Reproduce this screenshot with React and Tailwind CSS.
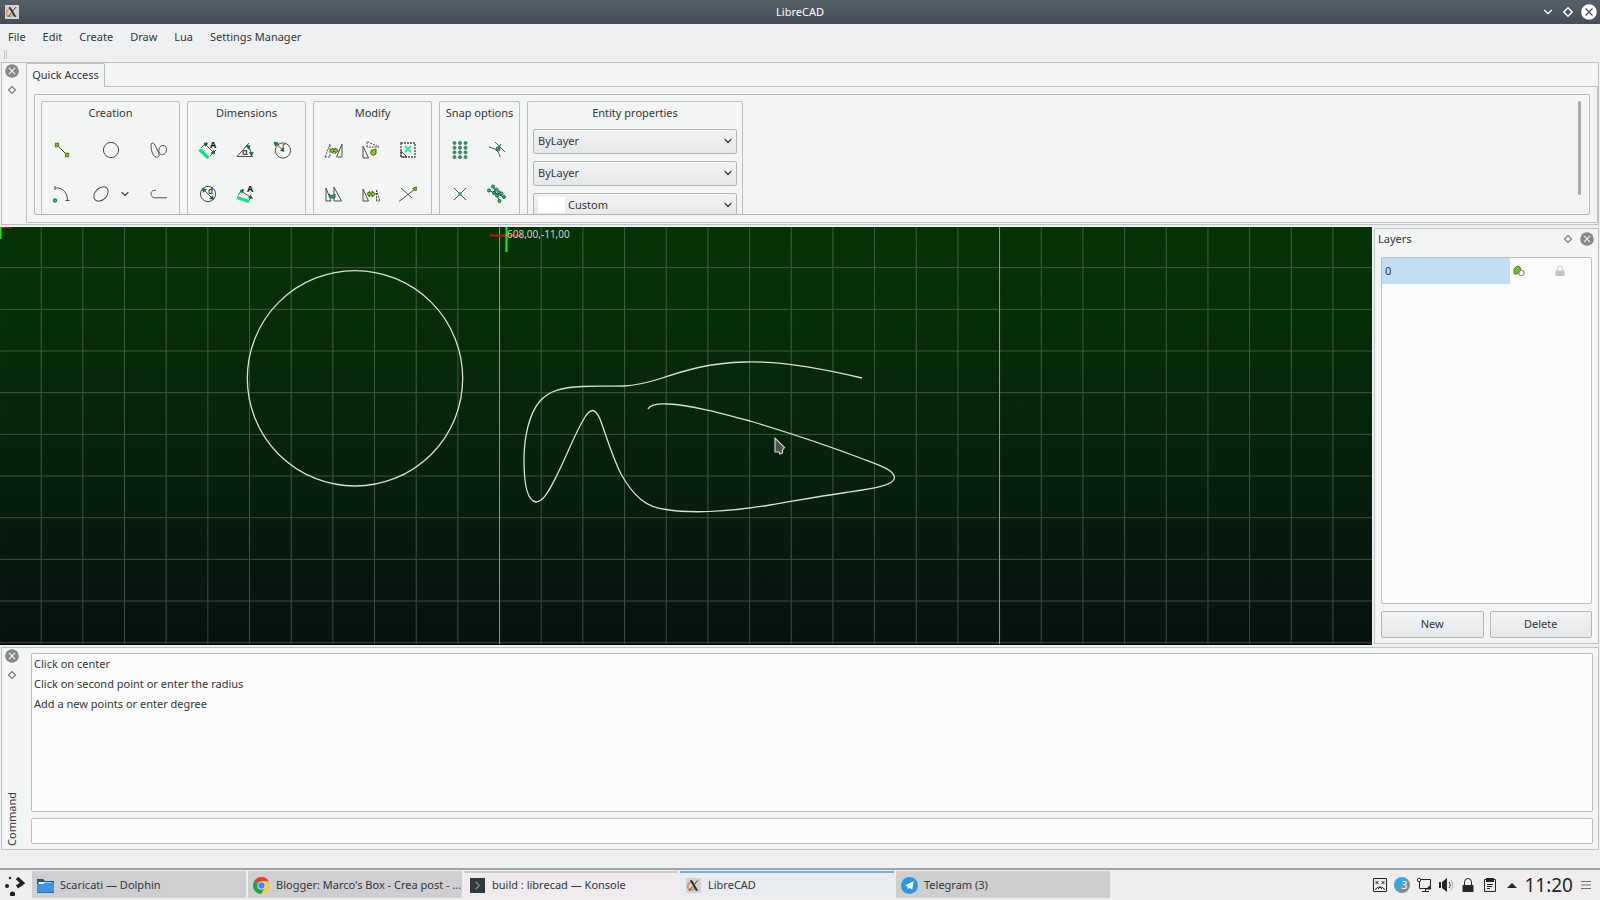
import { ChevronDown } from 'lucide-react'

const menus = ['File', 'Edit', 'Create', 'Draw', 'Lua', 'Settings Manager']

const messages = [
  'Click on center',
  'Click on second point or enter the radius',
  'Add a new points or enter degree',
]

function XLogo({ className }) {
  return (
    <svg viewBox="0 0 16 16" className={className} aria-hidden="true">
      <rect width="16" height="16" fill="#d3d3d1" />
      <path d="M6.5 3.5C2 5 .8 9 2.500 11.500s4.500 2 6.500-.5" fill="none" stroke="#e08a63" strokeWidth="1.6" />
      <path d="M4 2.500h2.500l6.500 11h-2.500z" fill="#2b2b2b" />
      <path d="M12.500 2.500L8.800 7M7 9.200l-3.600 4.300" stroke="#2b2b2b" strokeWidth="1" />
    </svg>
  )
}

function CloseIcon({ className, bg, fg }) {
  return (
    <svg viewBox="0 0 16 16" className={className} aria-hidden="true">
      <circle cx="8" cy="8" r="7.8" fill={bg} />
      <path d="M4.500 4.500l7 7M11.500 4.500l-7 7" stroke={fg} strokeWidth="1.3" />
    </svg>
  )
}

function Diamond({ className }) {
  return (
    <svg viewBox="0 0 10 10" className={className} aria-hidden="true">
      <path d="M5 1.500L8.500 5 5 8.500 1.500 5z" fill="none" stroke="currentColor" strokeWidth="1.2" />
    </svg>
  )
}

// All tool icons share an 18x18 box
function Tool({ label, children }) {
  return (
    <button type="button" aria-label={label} className="flex h-5 w-5 items-center justify-center">
      <svg viewBox="0 0 18 18" className="h-[18px] w-[18px] overflow-visible" fill="none" stroke="#4a4d4f" strokeWidth="1">
        {children}
      </svg>
    </button>
  )
}

const Arrow = ({ d }) => <path d={d} fill="#12693c" stroke="#12693c" strokeWidth="0.6" />

function AlignedIcon({ label, low }) {
  return (
    <Tool label={label}>
      <path d={low ? 'M1 12.500L13 16.500' : 'M.5 8.500L9.500 17'} stroke="#13e08a" strokeWidth="3.2" />
      <path d={low ? 'M2 10l5-6M13 15l3-3M5 6l11 7' : 'M2 7l6-6M11 15l6-6M6 3l9 9'} />
      <Arrow d={low ? 'M4 5.500l4-.8-1.600 3.400zM16.500 13.500l-4-.6 2-2.800z' : 'M5 2l4 .6-2.800 2.800zM16 13l-4-.8 2.800-3z'} />
      <text x="11" y="7" fontSize="9" fontWeight="700" fill="#111" stroke="none">A</text>
    </Tool>
  )
}

function Creation() {
  return (
    <>
      <Tool label="Line">
        <path d="M4 4l10 10" stroke="#333" />
        <path d="M2.500 2.500h3v3h-3zM12.500 12.500h3v3h-3z" fill="#a4d63a" stroke="#5a8c12" strokeWidth="1.3" />
      </Tool>
      <Tool label="Circle">
        <circle cx="9" cy="9" r="7.6" />
      </Tool>
      <Tool label="Spline">
        <path d="M2 2C-.5 4 2 16 6.500 16.300c4 .2 2.500-4 1-7C6 6 4 1 2 2z" />
        <path d="M13 4.500c-3.500 0-4.500 4-4 6.500.6 3 4 3.500 6 1.500s2.500-8-2-8z" />
      </Tool>
      <Tool label="Arc">
        <path d="M2 3c8-1 12.500 5 12.500 12.500M2 1v4M12.500 15.500h4" />
        <circle cx="2" cy="15.500" r="1.500" fill="#7bbf9c" stroke="#12805a" strokeWidth="1.3" />
      </Tool>
      <div className="flex items-center gap-2">
        <Tool label="Ellipse">
          <ellipse cx="9" cy="9" rx="8.300" ry="5.800" transform="rotate(-45 9 9)" />
        </Tool>
        <button type="button" aria-label="More ellipses" className="text-[#4a4d4f]">
          <ChevronDown className="h-3 w-3" strokeWidth={2.5} />
        </button>
      </div>
      <Tool label="Polyline">
        <path d="M6 5.500C2 4.500 0 8 1.500 10.500c1 2 2 2.300 4 2.300H17" />
      </Tool>
    </>
  )
}

function Dimensions() {
  return (
    <>
      <AlignedIcon label="Aligned dimension" />
      <Tool label="Angular dimension">
        <path d="M1 15.500h16M1 15.500L13 2M11 4c3 3 4.500 7 4.500 11" />
        <Arrow d="M10 5l4-.6-1 4zM15.500 15l-2.200-3.500h4z" />
        <text x="6" y="14" fontSize="9" fontWeight="600" fill="#333" stroke="none">α</text>
      </Tool>
      <Tool label="Radius dimension">
        <circle cx="10" cy="9.500" r="7.600" />
        <path d="M2 1.500l8 8" />
        <Arrow d="M1 1l4.500 1-3.200 3.200zM11 10.500L7.500 9.500l3-3z" />
        <text x="9" y="8" fontSize="8" fill="#333" stroke="none">r</text>
      </Tool>
      <Tool label="Diameter dimension">
        <circle cx="9" cy="9" r="7.600" />
        <path d="M4 4l10 10" />
        <Arrow d="M3 3.500l4.500.8-3 3zM15 14.500l-4.500-.8 3-3z" />
        <text x="9" y="9" fontSize="8" fontWeight="600" fill="#333" stroke="none">d</text>
      </Tool>
      <AlignedIcon label="Linear dimension" low />
    </>
  )
}

function Modify() {
  return (
    <>
      <Tool label="Move">
        <path d="M0 16L5 3v13z" strokeDasharray="2 1" />
        <path d="M17 3v13h-5.500z" />
        <path d="M5 9.500l3-2.500v1.500h2V7l3.500 2.500-3.500 3v-2H8v2z" fill="#8cc81e" stroke="#3e6b0a" />
      </Tool>
      <Tool label="Rotate">
        <path d="M1 5v12h5.500z" />
        <path d="M5 6V.5L17 6z" strokeDasharray="2 1" />
        <path d="M9 9.500l5-1.500v5l-2 1c-2 1-4-1-3-4z" fill="#8cc81e" stroke="#3e6b0a" />
      </Tool>
      <Tool label="Scale">
        <path d="M2 2h14v14H2z" strokeDasharray="2 1" strokeWidth="1.4" />
        <path d="M2 10l6 6H2z" />
        <path d="M6 5l6 6M12 5l-6 6" stroke="#2ee6a0" strokeWidth="1.8" />
      </Tool>
      <Tool label="Mirror">
        <path d="M1 3v13h5zM9 2l7.500 14H9z" />
        <path d="M4 9c2 2 4 2 6 0v4H6z" fill="#2f9e7a" stroke="#176b50" />
      </Tool>
      <Tool label="Copy">
        <path d="M1 4v12h5.500z" />
        <path d="M14.500 5l3.500 11h-3.500z" strokeDasharray="2 1" />
        <path d="M5 8.500l2.500-2V8H10V6l3.500 3-3.500 3v-2H7.500v2z" fill="#8cc81e" stroke="#3e6b0a" />
      </Tool>
      <Tool label="Trim">
        <path d="M0 16.500L16 4M2 3l11 10" />
        <path d="M13.500 3.500L17.500 2l-.5 4z" fill="#8cc81e" stroke="#4a6b1a" />
      </Tool>
    </>
  )
}

const gridDots = [2, 6.7, 11.3, 16]
const entityDots = [[5, 1.5], [1, 5.5], [8.5, 4.5], [6, 8], [11, 7.5], [9, 10.5], [13.5, 8.5], [16, 12], [11.5, 16]]

function SnapOptions() {
  return (
    <>
      <Tool label="Snap to grid">
        {gridDots.map((y) =>
          [3.5, 9, 14.5].map((x) => (
            <circle key={`${x}-${y}`} cx={x} cy={y} r="1.500" fill="#3a9e6c" stroke="#12693c" strokeWidth="0.7" />
          ))
        )}
      </Tool>
      <Tool label="Snap to intersection">
        <path d="M1 6c8 2 10 5 11 10M7 1l10 10M13 3L9 8" />
        <circle cx="10" cy="8" r="2" fill="#3a9e6c" stroke="#12693c" />
      </Tool>
      <Tool label="Snap to middle">
        <path d="M3 3l12 12M15 3L3 15" />
        <circle cx="9" cy="9" r="1.800" fill="#3a9e6c" stroke="none" />
      </Tool>
      <Tool label="Snap to entity">
        <path d="M1 5.500l15 6.500M5 1.500L11.500 16" stroke="#12693c" />
        {entityDots.map(([x, y]) => (
          <circle key={`${x}-${y}`} cx={x} cy={y} r="1.500" fill="#4fb084" stroke="#12693c" />
        ))}
      </Tool>
    </>
  )
}

function Group({ title, className, grid, children }) {
  return (
    <section className={`h-36 shrink-0 rounded-xs border border-[#bdbfc0] ${className}`}>
      <h2 className="pt-[3px] text-center leading-4">{title}</h2>
      <div className={`mt-[7px] grid auto-rows-[44px] place-items-center ${grid}`}>{children}</div>
    </section>
  )
}

function Combo({ label, options, swatch }) {
  return (
    <div className="relative">
      <select
        aria-label={label}
        className={`block h-[25px] w-full appearance-none rounded-xs border border-[#b4b6b8] bg-linear-to-b from-[#f1f2f3] to-[#e7e8ea] pr-6 ${swatch ? 'pl-[34px]' : 'pl-1'}`}
      >
        {options.map((o) => (
          <option key={o}>{o}</option>
        ))}
      </select>
      {swatch && <span className="absolute top-1 left-[5px] h-4 w-[27px] bg-white" />}
      <ChevronDown className="pointer-events-none absolute top-1.5 right-[3px] h-3 w-3 text-[#3a3d40]" strokeWidth={2.5} />
    </div>
  )
}

function DockControls() {
  return (
    <>
      <button type="button" aria-label="Close dock">
        <CloseIcon className="h-3.5 w-3.5" bg="#868889" fg="#f5f6f6" />
      </button>
      <button type="button" aria-label="Float dock" className="text-[#7b7d7f]">
        <Diamond className="h-2.5 w-2.5" />
      </button>
    </>
  )
}

function Drawing() {
  return (
    <svg className="block h-full w-full" role="img" aria-label="Drawing area">
      <defs>
        <linearGradient id="backdrop" x1="0" y1="0" x2="0" y2="1">
          <stop offset="0" stopColor="#063406" />
          <stop offset="1" stopColor="#071210" />
        </linearGradient>
        <pattern id="grid" x="-1" y="-1.500" width="41.670" height="41.670" patternUnits="userSpaceOnUse">
          <path d="M0 .5h41.670M.5 0v41.670" stroke="#fff" strokeOpacity="0.22" />
        </pattern>
      </defs>
      <rect width="100%" height="100%" fill="url(#backdrop)" />
      <rect width="100%" height="100%" fill="url(#grid)" />
      <path d="M499.500 0v2000M999.500 0v2000" stroke="#a9b3a9" strokeOpacity="0.7" />
      <path d="M0 .5h12" stroke="#b31212" strokeWidth="2" />
      <path d="M.5 0v12" stroke="#1fe01f" strokeWidth="2" />
      <path d="M490 8.500h32" stroke="#c81414" strokeWidth="2" />
      <path d="M506.500 0v25" stroke="#28e628" strokeWidth="2" />
      <text x="507" y="11" fontSize="10" fill="#c9d2c9">608,00,-11,00</text>
      <g fill="none" stroke="#d6e0d2" strokeWidth="1.3">
        <circle cx="355" cy="151.300" r="107.700" />
        <path d="M862 151C816 140 777 134 745 135C709 136 686 143 659 152C643 157 636 158.500 624 159C606 159.500 597 158.500 582 159.500C561 160.500 549 164 540 174C529 187 524 210 524 233C524 258 528 274 536 275C544 275 551 260 558 246C568 226 575 206 585 190C591 181 595 181 600 192C606 208 612 229 621 247C634 270 646 280 666 282.500C700 288 745 282 770 278C800 273 815 270 846 265.500C870 262 894.500 259 894.500 250.500C894.500 243 878 237.500 863 232C830 219.500 790 206 750 194C720 186 690 178 668 177C658 176.500 650 178 648 182" />
      </g>
      <path d="M775 211v14h4l1 2 2.500-1v-3l2-2.500z" fill="#4d544f" stroke="#d5d9d5" strokeWidth="1.1" />
    </svg>
  )
}

function FolderIcon() {
  return (
    <svg viewBox="0 0 17 17" className="h-[17px] w-[17px] shrink-0" aria-hidden="true">
      <path d="M0 2h6l2 2h9v6H0z" fill="#20557e" />
      <path d="M1.500 5H15v5H1.500z" fill="#f4f8fb" />
      <path d="M0 7h6l2-1.500h9V16H0z" fill="#3d93e8" />
      <path d="M0 15h17v1H0z" fill="#2a6db5" />
    </svg>
  )
}

function ChromeIcon() {
  return (
    <svg viewBox="0 0 18 18" className="h-[17px] w-[17px] shrink-0" aria-hidden="true">
      <circle cx="9" cy="9" r="9" fill="#f6cb3c" />
      <path d="M9 9L1.200 4.500A9 9 0 0 1 16.800 4.500H9z" fill="#dc4437" />
      <path d="M9 9L1.200 4.500A9 9 0 0 0 8.500 18L12.500 11z" fill="#1ea05c" />
      <circle cx="9" cy="9" r="4.300" fill="#f3f3f3" />
      <circle cx="9" cy="9" r="3.400" fill="#4a88ee" />
    </svg>
  )
}

function KonsoleIcon() {
  return (
    <svg viewBox="0 0 16 16" className="h-[17px] w-[17px] shrink-0 px-px" aria-hidden="true">
      <rect width="16" height="16" fill="#33383b" />
      <path d="M6 4l4 4-4 4" fill="none" stroke="#8a9094" strokeWidth="1.2" />
    </svg>
  )
}

function TelegramIcon() {
  return (
    <svg viewBox="0 0 16 16" className="h-[17px] w-[17px] shrink-0" aria-hidden="true">
      <circle cx="8" cy="8" r="8" fill="#2a96e6" />
      <path d="M3.500 8l8.500-4-1.500 8-2.500-2-1.500 1.500L6 9z" fill="#fff" />
    </svg>
  )
}

const tasks = [
  { title: 'Scaricati — Dolphin', icon: <FolderIcon />, look: 'border-t-[#d0d0d2] bg-[#cfcfd1]' },
  { title: "Blogger: Marco's Box - Crea post - ...", icon: <ChromeIcon />, look: 'border-t-[#d0cfd1] bg-[#cfced0]' },
  { title: 'build : librecad — Konsole', icon: <KonsoleIcon />, look: 'border-t-[#cdcbce] bg-[#efebee]' },
  { title: 'LibreCAD', icon: <XLogo className="h-[17px] w-[17px] shrink-0 px-px" />, look: 'border-t-[#6fb4dc] bg-[#e9ecf0]' },
  { title: 'Telegram (3)', icon: <TelegramIcon />, look: 'border-t-[#cfcfd0] bg-[#cececf]' },
]

function Tray() {
  return (
    <div className="flex items-center gap-[2px] pr-[9px] text-[#232629]">
      <div className="flex items-center gap-[6px]">
        <svg viewBox="0 0 16 16" className="h-4 w-4" fill="none" stroke="currentColor" aria-hidden="true">
          <path d="M1.500 1.500h13v13h-13z" />
          <path d="M3.500 4l3 3M6.500 4l-3 3M9.500 4l3 3M12.500 4l-3 3M3.500 13c1-4 8-4 9 0M6 12l2-2 2 2" />
        </svg>
        <span className="flex h-4 w-4 items-center justify-center rounded-full bg-linear-to-br from-[#35a8dc] from-50% to-[#8b8b8b] to-60% pl-1 text-[10px] leading-4 text-white">3</span>
        <svg viewBox="0 0 16 16" className="h-4 w-4" fill="none" stroke="currentColor" aria-hidden="true">
          <path d="M5 2.500h9.500v9H3.500V5M6 14.500h7M9.500 12v2" />
          <circle cx="3" cy="3" r="1.700" />
          <path d="M10.500 12l4-3.500V12z" fill="currentColor" />
        </svg>
        <svg viewBox="0 0 16 16" className="h-4 w-4" fill="currentColor" aria-hidden="true">
          <path d="M1 5h2v6H1zM4 5l5-4v14l-5-4z" />
          <path d="M11 5c1.500 2 1.500 4 0 6" fill="none" stroke="currentColor" />
          <path d="M12.500 2.500c3 3 3 8 0 11" fill="none" stroke="#aaa" />
        </svg>
        <svg viewBox="0 0 16 16" className="h-4 w-4" fill="currentColor" aria-hidden="true">
          <path d="M2.500 8h11v7h-11z" />
          <path d="M4.500 8V5a3.500 3.500 0 0 1 7 0v3" fill="none" stroke="currentColor" />
        </svg>
        <svg viewBox="0 0 16 16" className="h-4 w-4" fill="none" stroke="currentColor" aria-hidden="true">
          <path d="M2.500 2.500h11v12h-11zM5 7.500h6M5 9.500h5M5 11.500h3" />
          <path d="M4 1h8v4H4z" fill="currentColor" stroke="none" />
        </svg>
        <svg viewBox="0 0 16 16" className="h-4 w-4" fill="currentColor" aria-hidden="true">
          <path d="M3 11l5-5 5 5z" />
        </svg>
      </div>
      <time className="pl-[2px] text-[19px] leading-6">11:20</time>
      <button type="button" aria-label="Panel menu" className="pl-[6px]">
        <svg viewBox="0 0 10 10" className="h-2.5 w-2.5" stroke="#6d6f71" strokeWidth="1.2" aria-hidden="true">
          <path d="M0 1.500h10M0 5h10M0 8.500h10" />
        </svg>
      </button>
    </div>
  )
}

export default function App() {
  return (
    <div className="flex h-screen flex-col overflow-hidden bg-[#eff0f1] font-['Noto_Sans',sans-serif] text-[11px] text-[#31363b]">
      <header className="flex h-6 shrink-0 items-center bg-linear-to-b from-[#566069] to-[#454e56] pr-[3px] pl-[5px] text-white">
        <XLogo className="h-3.5 w-3.5" />
        <h1 className="flex-1 pl-10 text-center">LibreCAD</h1>
        <div className="flex items-center gap-[7px]">
          <button type="button" aria-label="Minimize"><ChevronDown className="h-3.5 w-3.5" strokeWidth={2} /></button>
          <button type="button" aria-label="Maximize"><Diamond className="h-3 w-3" /></button>
          <button type="button" aria-label="Close"><CloseIcon className="h-4 w-4" bg="#fcfcfc" fg="#4a535b" /></button>
        </div>
      </header>

      <nav className="flex h-[26px] shrink-0 items-center gap-[17px] px-2">
        {menus.map((m) => (
          <button key={m} type="button">{m}</button>
        ))}
      </nav>
      <div className="flex h-3 shrink-0 gap-px pl-1">
        <span className="h-[9px] w-px bg-[#c3c5c6]" />
        <span className="h-[9px] w-px bg-[#c3c5c6]" />
      </div>

      <section className="mx-px flex h-[163px] shrink-0 border border-[#c0c2c3] bg-[#f3f5f4]">
        <div className="flex w-6 shrink-0 flex-col items-center gap-[7px] pt-px pr-1">
          <DockControls />
        </div>
        <div className="flex min-w-0 flex-1 flex-col pb-px">
          <div className="flex h-6 shrink-0" role="tablist">
            <button type="button" role="tab" aria-selected="true" className="w-[79px] rounded-t-xs border border-b-0 border-[#bdbfc0]">
              Quick Access
            </button>
            <div className="flex-1 border-b border-[#bdbfc0]" />
          </div>
          <div className="flex min-h-0 flex-1 border border-t-0 border-[#bdbfc0] p-[7px]">
            <div className="flex min-w-0 flex-1 overflow-hidden rounded-xs border border-[#b4b6b7] px-1.5 pt-1.5">
              <div className="flex min-w-0 flex-1 gap-[7px]">
                <Group title="Creation" className="w-[139px]" grid="grid-cols-[20px_1fr_20px] px-[10px]">
                  <Creation />
                </Group>
                <Group title="Dimensions" className="w-[119px]" grid="grid-cols-3 pr-[5px] pl-px">
                  <Dimensions />
                </Group>
                <Group title="Modify" className="w-[119px]" grid="grid-cols-3 pr-[5px] pl-px">
                  <Modify />
                </Group>
                <Group title="Snap options" className="w-[81px]" grid="grid-cols-2 pr-[3px] pl-px">
                  <SnapOptions />
                </Group>
                <section className="h-36 w-[216px] shrink-0 rounded-xs border border-[#bdbfc0] px-[5px]">
                  <h2 className="pt-[3px] text-center leading-4">Entity properties</h2>
                  <div className="mt-2 flex flex-col gap-[7px]">
                    <Combo label="Line width" options={['ByLayer', 'ByBlock']} />
                    <Combo label="Line pattern" options={['ByLayer', 'ByBlock']} />
                    <Combo label="Color" options={['Custom', 'ByLayer']} swatch />
                  </div>
                </section>
              </div>
              <div className="mr-[2px] h-[94px] w-[3px] rounded-full bg-[#a9abac]" />
            </div>
          </div>
        </div>
      </section>

      <main className="mt-0.5 flex min-h-0 flex-1">
        <div className="min-w-0 flex-1 border-b border-black bg-[#071210]">
          <Drawing />
        </div>
        <aside className="mt-px mr-px mb-px ml-0.5 flex w-[225px] shrink-0 flex-col border border-[#c0c2c3] bg-[#f3f5f4] px-1.5 pb-[5px]">
          <div className="-mx-1.5 flex h-5 items-center pr-1 pl-[3px]">
            <h2 className="flex-1">Layers</h2>
            <div className="flex flex-row-reverse items-center gap-[7px]">
              <DockControls />
            </div>
          </div>
          <div className="mt-2 min-h-0 flex-1 rounded-xs border border-[#bdbfc0] bg-[#fcfcfc]">
            <table className="w-full">
              <tbody>
                <tr className="h-[26px]">
                  <td className="w-[128px] bg-[#c1def4] pl-[3px]">0</td>
                  <td className="w-[41px] pl-[3px]">
                    <svg viewBox="0 0 12 12" className="h-3 w-3" aria-label="Visible">
                      <path d="M1 4l3-3 3 1 1 4-4 3H1z" fill="#6cc51f" stroke="#387a12" strokeWidth="0.8" />
                      <circle cx="8.500" cy="8" r="2.700" fill="#f5f5f5" stroke="#555" strokeWidth="0.8" />
                    </svg>
                  </td>
                  <td className="pl-1">
                    <svg viewBox="0 0 10 12" className="h-3 w-2.5" aria-label="Unlocked">
                      <path d="M.5 5.500h9V11h-9z" fill="#c4c4c4" />
                      <path d="M2.500 6V3.500a2.500 2.500 0 0 1 5 0V6" fill="none" stroke="#c9c9c9" />
                    </svg>
                  </td>
                </tr>
              </tbody>
            </table>
          </div>
          <div className="mt-[7px] flex shrink-0 gap-1.5">
            {['New', 'Delete'].map((b) => (
              <button key={b} type="button" className="h-[27px] flex-1 rounded-xs border border-[#b4b6b8] bg-linear-to-b from-[#f1f2f3] to-[#e7e8ea]">
                {b}
              </button>
            ))}
          </div>
        </aside>
      </main>

      <section className="mx-px mt-0.5 flex h-[203px] shrink-0 border border-[#c0c2c3] bg-[#f3f5f4]">
        <div className="flex w-[29px] shrink-0 flex-col items-center gap-[7px] pt-px pr-[9px]">
          <DockControls />
          <h2 className="mt-auto rotate-180 pt-[3px] leading-4 [writing-mode:vertical-rl]">Command</h2>
        </div>
        <div className="flex min-w-0 flex-1 flex-col gap-[6px] py-[5px] pr-[5px]">
          <div className="min-h-0 flex-1 rounded-xs border border-[#bdbfc0] bg-[#fcfcfc] px-[2px]" role="log">
            {messages.map((m) => (
              <p key={m} className="leading-5">{m}</p>
            ))}
          </div>
          <input type="text" aria-label="Command" className="h-[26px] shrink-0 rounded-xs border border-[#bdbfc0] bg-[#fcfcfc] px-1" />
        </div>
      </section>

      <footer className="mt-[18px] flex h-8 shrink-0 border-t-2 border-[#a3a3a5] bg-[#efedee]">
        <button type="button" aria-label="Application launcher" className="w-8 shrink-0 pl-1">
          <svg viewBox="0 0 22 22" className="h-[22px] w-[22px]" fill="#1d1f21" aria-hidden="true">
            <circle cx="6" cy="4" r="1.200" />
            <circle cx="3" cy="12" r="2" />
            <circle cx="8.500" cy="20" r="2.600" />
            <path d="M13 4l5.500 5-5.500 4" fill="none" stroke="#1d1f21" strokeWidth="3.5" />
          </svg>
        </button>
        <div className="flex flex-1 gap-[2px] pt-px pb-[2px]">
          {tasks.map((t) => (
            <button key={t.title} type="button" className={`flex w-[214px] items-center gap-[6px] border-t-2 pl-[5px] text-left text-[12px] whitespace-nowrap ${t.look}`}>
              {t.icon}
              <span className="text-[11px]">{t.title}</span>
            </button>
          ))}
        </div>
        <Tray />
      </footer>
    </div>
  )
}
